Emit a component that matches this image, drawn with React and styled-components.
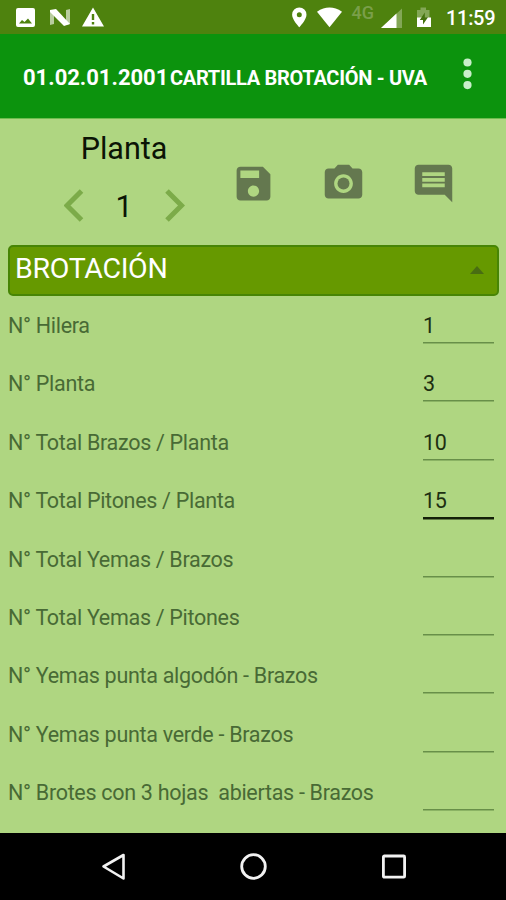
import React, { useState } from "react";
import styled, { createGlobalStyle } from "styled-components";

const GlobalStyle = createGlobalStyle`
  * {
    box-sizing: border-box;
  }
  body {
    margin: 0;
    font-family: Roboto, "Liberation Sans", sans-serif;
  }
`;

const fields = [
  { label: "N° Hilera", value: "1" },
  { label: "N° Planta", value: "3" },
  { label: "N° Total Brazos / Planta", value: "10" },
  { label: "N° Total Pitones / Planta", value: "15" },
  { label: "N° Total Yemas / Brazos", value: "" },
  { label: "N° Total Yemas / Pitones", value: "" },
  { label: "N° Yemas punta algodón - Brazos", value: "" },
  { label: "N° Yemas punta verde - Brazos", value: "" },
  { label: "N° Brotes con 3 hojas  abiertas - Brazos", value: "" },
];

function StatusIcons() {
  return (
    <svg width="110" height="34" fill="#fff">
      <path
        fillRule="evenodd"
        d="M18 8h15q2 0 2 2v15q0 2-2 2H18q-2 0-2-2V10q0-2 2-2zM19 23.500h13l-4-5-3.500 3.500-2.500-2z"
      />
      <path d="M50 11l4-1v14l-4 1zM66 10l4-1v15l-4 1z" opacity=".6" />
      <path d="M50 10l6-1 14 15-6 2-14-14z" />
      <path
        fillRule="evenodd"
        d="M93 7.500l11 19H82zM91.800 14v6h2.400v-6zM91.800 22v2.400h2.400V22z"
      />
    </svg>
  );
}

function SignalIcons() {
  return (
    <SignalGroup>
      <svg width="57" height="34" fill="#fff">
        <path
          fillRule="evenodd"
          d="M14.300 7.500a7.200 7.200 0 0 0-7.200 7.200c0 5 7.200 12.500 7.200 12.500s7.200-7.500 7.200-12.500a7.200 7.200 0 0 0-7.200-7.200zm0 4.700a2.500 2.500 0 1 1 0 5 2.500 2.500 0 0 1 0-5z"
        />
        <path d="M32 11.700Q44.500 3.500 57 11.700L44.500 27.200z" />
      </svg>
      <Network>4G</Network>
      <svg width="60" height="34" fill="#fff">
        <path d="M28 8.500V28H7z" opacity=".3" />
        <path d="M22.500 13.600V28H7z" />
        <path d="M43 10h3.500V7.500h5.500V10h3.500v8H43z" opacity=".3" />
        <path d="M43 17.500h14v9.500H43z" />
        <path d="M50.800 12.500l-5 7.500h3.200v4.500l5-7.300h-3.200z" fill="#43720d" />
      </svg>
    </SignalGroup>
  );
}

export default function App() {
  const [plant, setPlant] = useState(1);
  const [open, setOpen] = useState(true);
  const [active, setActive] = useState(3);

  return (
    <Screen>
      <GlobalStyle />
      <StatusBar>
        <StatusIcons />
        <StatusRight>
          <SignalIcons />
          <Clock>11:59</Clock>
        </StatusRight>
      </StatusBar>

      <AppBar>
        <Code>01.02.01.2001</Code>
        <Title>CARTILLA BROTACIÓN - UVA</Title>
        <MenuButton aria-label="Menu">
          <svg width="12" height="34" fill="#c9efca">
            <circle cx="5.500" cy="5.500" r="4.100" />
            <circle cx="5.500" cy="16.800" r="4.100" />
            <circle cx="5.500" cy="28.100" r="4.100" />
          </svg>
        </MenuButton>
      </AppBar>

      <Content>
        <Toolbar>
          <PlantPicker>
            <PlantTitle>Planta</PlantTitle>
            <Stepper>
              <IconButton
                aria-label="Anterior"
                onClick={() => setPlant(Math.max(1, plant - 1))}
              >
                <svg width="20" height="34" fill="none" stroke="#7cab49" strokeWidth="5">
                  <path d="M17.500 2L3 16.500 17.500 31" />
                </svg>
              </IconButton>
              <PlantNumber>{plant}</PlantNumber>
              <IconButton aria-label="Siguiente" onClick={() => setPlant(plant + 1)}>
                <svg width="20" height="34" fill="none" stroke="#7cab49" strokeWidth="5">
                  <path d="M2 2L16.500 16.500 2 31" />
                </svg>
              </IconButton>
            </Stepper>
          </PlantPicker>
          <Actions>
            <IconButton aria-label="Guardar">
              <ActionIcon viewBox="0 0 24 24">
                <path d="M17 3H5c-1.110 0-2 .9-2 2v14c0 1.100.89 2 2 2h14c1.100 0 2-.9 2-2V7l-4-4zm-5 16c-1.660 0-3-1.340-3-3s1.340-3 3-3 3 1.340 3 3-1.340 3-3 3zm3-10H5V5h10v4z" />
              </ActionIcon>
            </IconButton>
            <IconButton aria-label="Foto">
              <ActionIcon viewBox="0 0 24 24">
                <circle cx="12" cy="12" r="3.200" />
                <path d="M9 2L7.170 4H4c-1.100 0-2 .9-2 2v12c0 1.100.9 2 2 2h16c1.100 0 2-.9 2-2V6c0-1.100-.9-2-2-2h-3.170L15 2H9zm3 15c-2.760 0-5-2.240-5-5s2.240-5 5-5 5 2.240 5 5-2.240 5-5 5z" />
              </ActionIcon>
            </IconButton>
            <IconButton aria-label="Comentario">
              <ActionIcon viewBox="0 0 24 24">
                <path d="M21.990 4c0-1.100-.89-2-1.990-2H4c-1.100 0-2 .9-2 2v12c0 1.100.9 2 2 2h14l4 4-.01-18zM18 14H6v-2h12v2zm0-3H6V9h12v2zm0-3H6V6h12v2z" />
              </ActionIcon>
            </IconButton>
          </Actions>
        </Toolbar>

        <SectionHeader onClick={() => setOpen(!open)}>
          <SectionTitle>BROTACIÓN</SectionTitle>
          <Caret $open={open} viewBox="0 0 14 8">
            <path d="M0 8L7 0l7 8z" />
          </Caret>
        </SectionHeader>

        {open && (
          <Fields>
            {fields.map((field, index) => (
              <FieldRow key={field.label}>
                <Label>{field.label}</Label>
                <Input
                  defaultValue={field.value}
                  aria-label={field.label}
                  $active={index === active}
                  onFocus={() => setActive(index)}
                />
              </FieldRow>
            ))}
          </Fields>
        )}
      </Content>

      <NavBar>
        <svg width="26" height="28" fill="none" stroke="#f2f2f2" strokeWidth="2.600">
          <path d="M22.500 2v23.500L2.500 13.500z" strokeLinejoin="round" />
        </svg>
        <svg width="28" height="28" fill="none" stroke="#f2f2f2" strokeWidth="2.800">
          <circle cx="13.500" cy="13.500" r="11.800" />
        </svg>
        <svg width="26" height="28" fill="none" stroke="#f2f2f2" strokeWidth="2.800">
          <rect x="2.400" y="3" width="21.200" height="21.200" rx="1" />
        </svg>
      </NavBar>
    </Screen>
  );
}

const Screen = styled.div`
  display: flex;
  flex-direction: column;
  width: 506px;
  height: 900px;
  overflow: hidden;
  background: #afd681;
`;

const StatusBar = styled.div`
  display: flex;
  justify-content: space-between;
  height: 34px;
  padding-right: 11px;
  background: #4e820e;
`;

const StatusRight = styled.div`
  display: flex;
`;

const SignalGroup = styled.div`
  display: flex;
  width: 161px;
`;

const Network = styled.span`
  width: 32px;
  padding: 3px 0 0 9.5px;
  font-size: 18px;
  font-weight: 500;
  line-height: 20px;
  color: #7a9f4a;
`;

const Clock = styled.span`
  width: 49px;
  font-size: 20px;
  font-weight: 500;
  line-height: 37px;
  letter-spacing: -0.3px;
  color: #fff;
`;

const AppBar = styled.header`
  display: flex;
  align-items: center;
  height: 84px;
  padding: 3px 32px 0 23px;
  background: #0c930d;
  color: #fff;
`;

const Code = styled.span`
  width: 147px;
  font-size: 22px;
  font-weight: 700;
  white-space: nowrap;
`;

const Title = styled.h1`
  flex: 1;
  margin: 0;
  font-size: 20px;
  font-weight: 700;
  line-height: 26px;
  letter-spacing: -0.3px;
  white-space: nowrap;
`;

const IconButton = styled.button`
  display: flex;
  padding: 0;
  border: 0;
  background: none;
  cursor: pointer;
`;

const MenuButton = styled(IconButton)`
  margin-top: -8px;
`;

const Content = styled.main`
  flex: 1;
  border-top: 1px solid #6fbd4e;
`;

const Toolbar = styled.div`
  display: flex;
  height: 126px;
`;

const PlantPicker = styled.div`
  display: flex;
  flex-direction: column;
  align-items: center;
  width: 231px;
  padding: 12px 0 0 17px;
`;

const PlantTitle = styled.div`
  font-size: 30.5px;
  line-height: 36px;
  color: #0b1405;
`;

const Stepper = styled.div`
  display: flex;
  align-items: center;
  justify-content: space-between;
  width: 121px;
  margin-top: 21px;
`;

const PlantNumber = styled.span`
  padding-top: 1px;
  font-size: 30.5px;
  line-height: 35px;
  color: #0b1405;
`;

const Actions = styled.div`
  display: flex;
  gap: 45px;
  padding-top: 42px;
`;

const ActionIcon = styled.svg`
  width: 45px;
  height: 45px;
  fill: #64784f;
`;

const SectionHeader = styled.div`
  display: flex;
  align-items: center;
  justify-content: space-between;
  height: 51px;
  margin: 0 7px 0 8px;
  padding: 0 13px 4px 5px;
  border: 2px solid #478505;
  border-radius: 5px;
  background: #669900;
  cursor: pointer;
`;

const SectionTitle = styled.span`
  font-size: 28.5px;
  line-height: 34px;
  letter-spacing: -0.3px;
  color: #fff;
`;

const Caret = styled.svg`
  width: 14px;
  height: 8px;
  margin-top: 3px;
  fill: #496d12;
  transform: ${(props) => (props.$open ? "none" : "rotate(180deg)")};
`;

const Fields = styled.div`
  padding: 0 12px 0 8px;
`;

const FieldRow = styled.label`
  display: flex;
  align-items: flex-start;
  justify-content: space-between;
  height: 58.4px;
  padding-top: 17px;
`;

const Label = styled.span`
  font-size: 21.5px;
  line-height: 26px;
  letter-spacing: -0.3px;
  white-space: pre;
  color: #486a35;
`;

const Input = styled.input`
  width: 71px;
  height: 29px;
  padding: 0 0 4px 0;
  border: 0;
  outline: 0;
  background: none;
  box-shadow: ${(props) =>
    props.$active ? "0 2.5px 0 #142008" : "0 1.5px 0 #688f49"};
  font-family: inherit;
  font-size: 21.5px;
  line-height: 25px;
  letter-spacing: -0.3px;
  color: #1d2f12;
`;

const NavBar = styled.nav`
  display: flex;
  align-items: center;
  justify-content: space-between;
  height: 67px;
  padding: 0 99px 0 101px;
  background: #000;
`;
